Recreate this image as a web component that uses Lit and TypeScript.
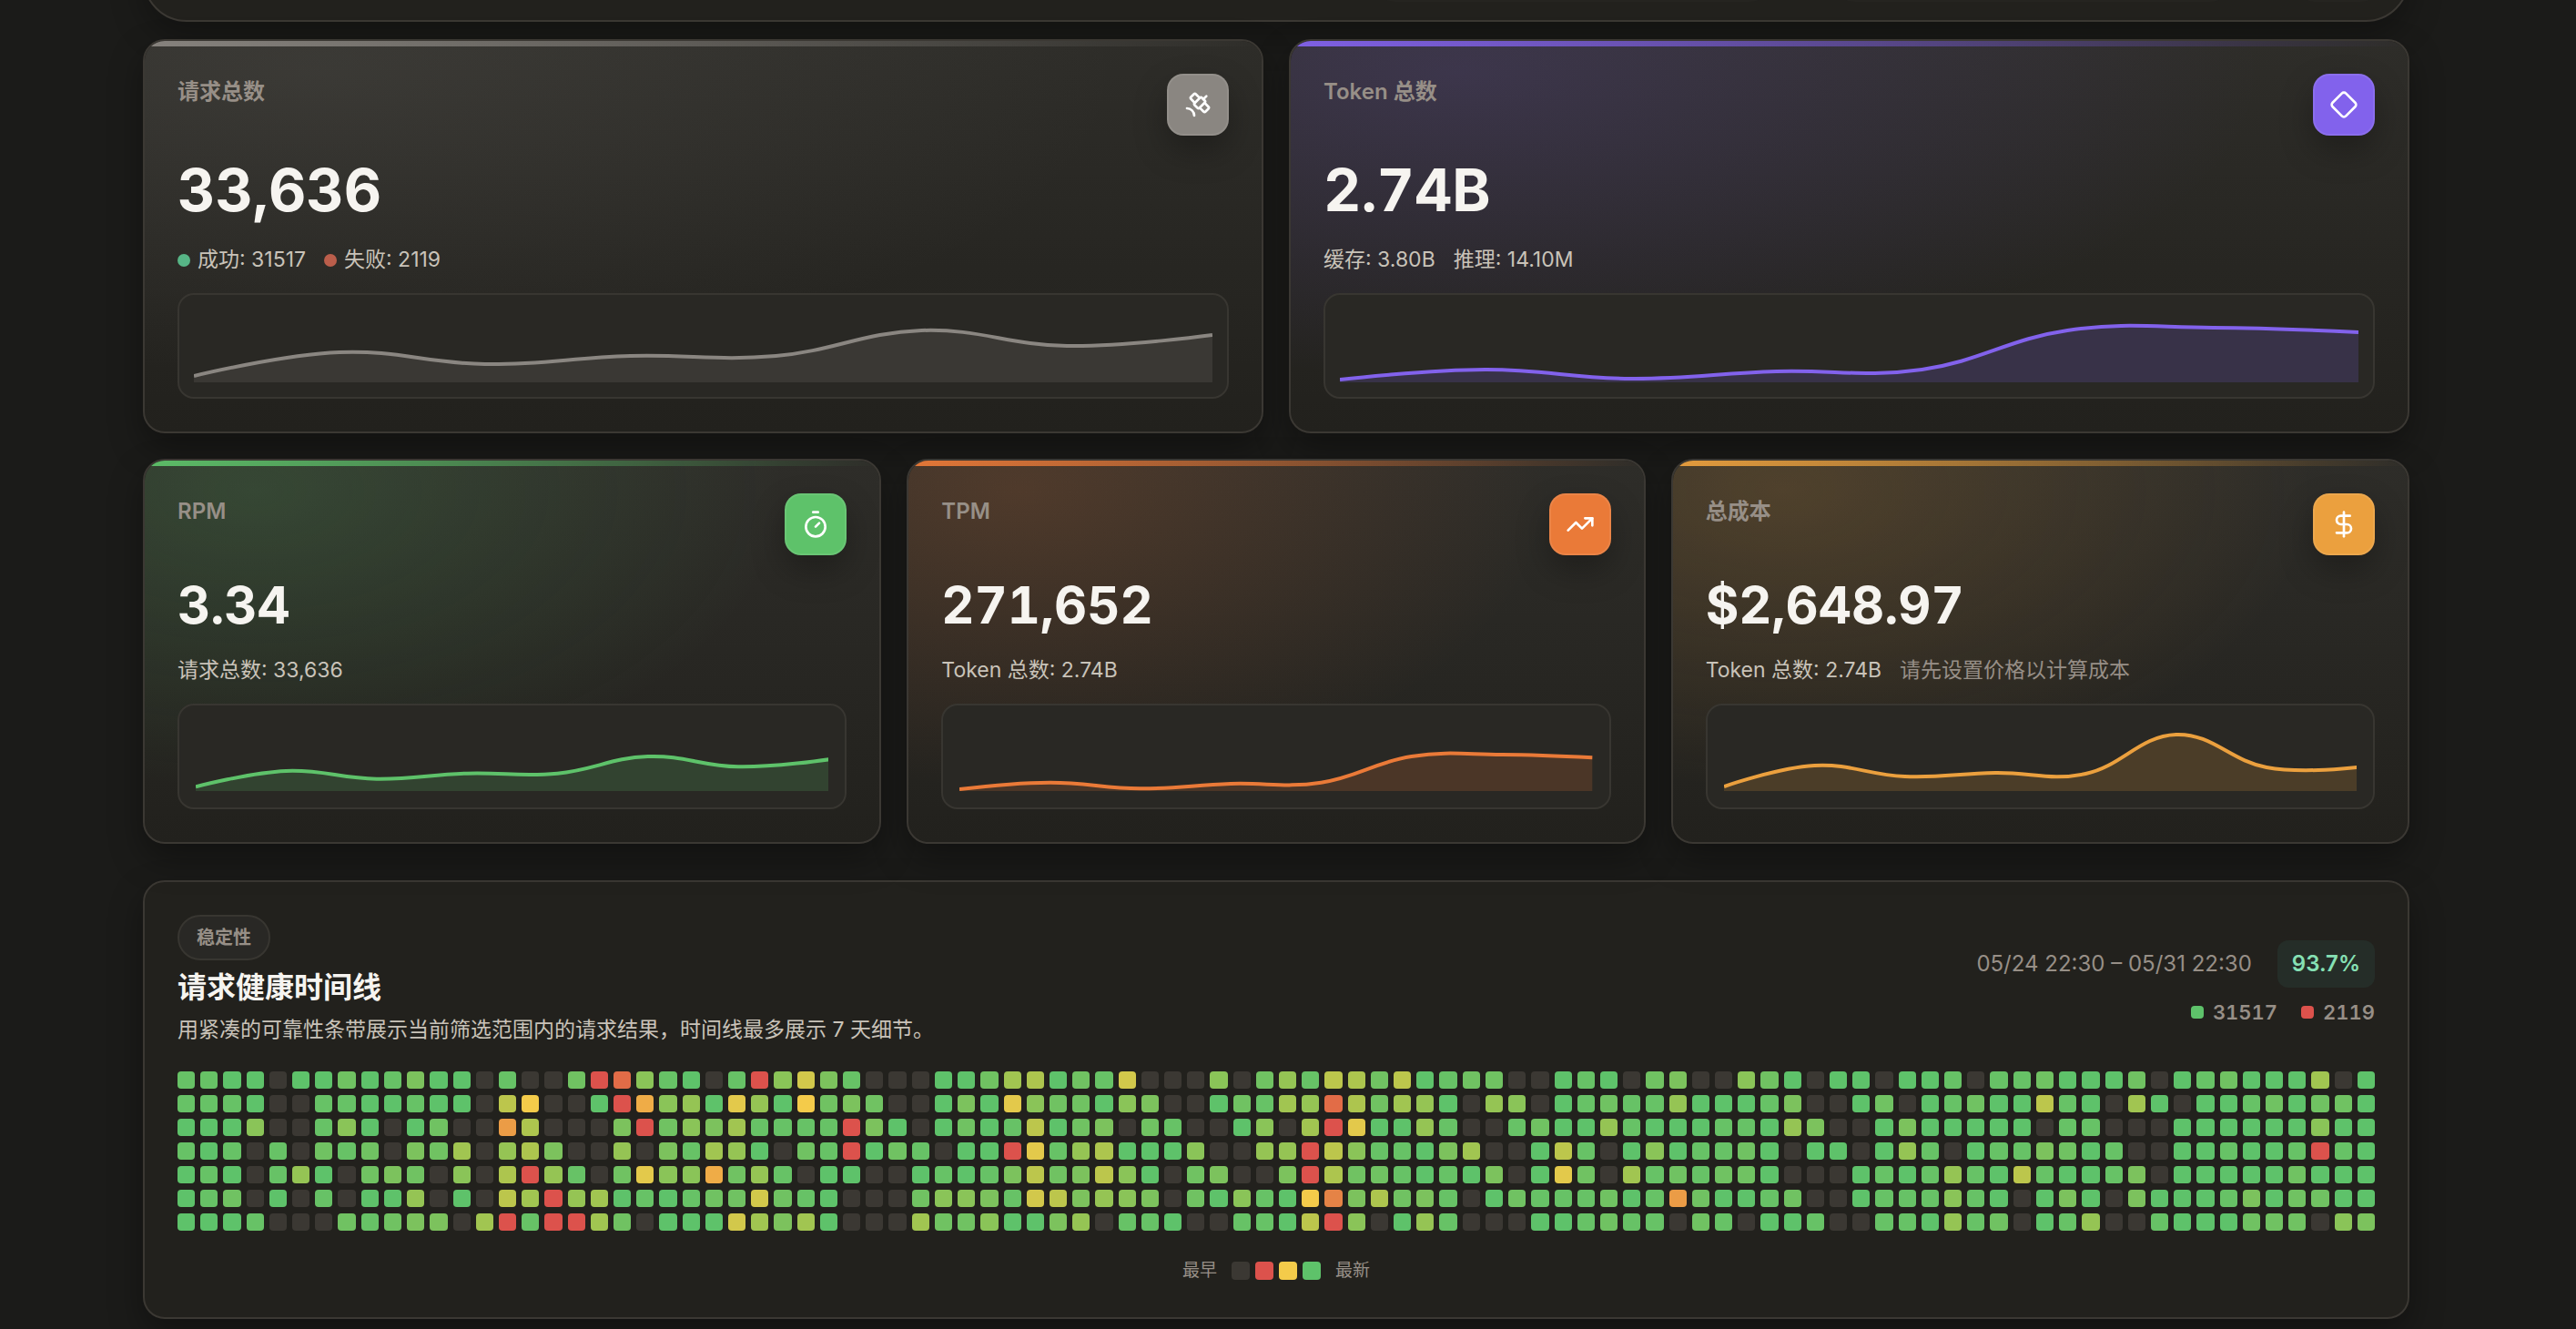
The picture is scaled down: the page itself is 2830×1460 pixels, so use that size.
import { LitElement, html, css, svg } from "lit";
import { customElement, property } from "lit/decorators.js";
import { styleMap } from "lit/directives/style-map.js";

type Tone = "slate" | "violet" | "green" | "orange" | "amber";

interface Meta {
  text: string;
  dot?: "ok" | "bad";
  muted?: boolean;
}

interface Stat {
  label: string;
  value: string;
  tone: Tone;
  icon: keyof typeof ICONS;
  meta: Meta[];
  points: number[];
}

const ICONS = {
  satellite: svg`<path d="m13.5 6.5-3.148-3.148a1.205 1.205 0 0 0-1.704 0L6.352 5.648a1.205 1.205 0 0 0 0 1.704L9.5 10.5"/><path d="M16.5 7.5 19 5"/><path d="m17.5 10.5 3.148 3.148a1.205 1.205 0 0 1 0 1.704l-2.296 2.296a1.205 1.205 0 0 1-1.704 0L13.5 14.5"/><path d="M9 21a6 6 0 0 0-6-6"/><path d="M9.352 10.648a1.205 1.205 0 0 0 0 1.704l2.296 2.296a1.205 1.205 0 0 0 1.704 0l4.296-4.296a1.205 1.205 0 0 0 0-1.704l-2.296-2.296a1.205 1.205 0 0 0-1.704 0z"/>`,
  diamond: svg`<path d="M2.7 10.3a2.41 2.41 0 0 0 0 3.41l7.59 7.59a2.41 2.41 0 0 0 3.41 0l7.59-7.59a2.41 2.41 0 0 0 0-3.41l-7.59-7.59a2.41 2.41 0 0 0-3.41 0Z"/>`,
  timer: svg`<line x1="10" x2="14" y1="2" y2="2"/><line x1="12" x2="15" y1="14" y2="11"/><circle cx="12" cy="14" r="8"/>`,
  trending: svg`<polyline points="22 7 13.5 15.5 8.5 10.5 2 17"/><polyline points="16 7 22 7 22 13"/>`,
  dollar: svg`<line x1="12" x2="12" y1="2" y2="22"/><path d="M17 5H9.5a3.5 3.5 0 0 0 0 7h5a3.5 3.5 0 0 1 0 7H6"/>`,
};

const REQUESTS = [7, 33, 20, 29, 29, 57, 40, 52];
const TOKENS = [3, 14, 4, 12, 14, 57, 60, 55];
const COST = [5, 28, 16, 20, 19, 62, 26, 26];
const shrink = (list: number[]) => list.map((v) => (v * 2) / 3);

const PRIMARY: Stat[] = [
  {
    label: "请求总数",
    value: "33,636",
    tone: "slate",
    icon: "satellite",
    meta: [
      { text: "成功: 31517", dot: "ok" },
      { text: "失败: 2119", dot: "bad" },
    ],
    points: REQUESTS,
  },
  {
    label: "Token 总数",
    value: "2.74B",
    tone: "violet",
    icon: "diamond",
    meta: [{ text: "缓存: 3.80B" }, { text: "推理: 14.10M" }],
    points: TOKENS,
  },
];

const SECONDARY: Stat[] = [
  {
    label: "RPM",
    value: "3.34",
    tone: "green",
    icon: "timer",
    meta: [{ text: "请求总数: 33,636" }],
    points: shrink(REQUESTS),
  },
  {
    label: "TPM",
    value: "271,652",
    tone: "orange",
    icon: "trending",
    meta: [{ text: "Token 总数: 2.74B" }],
    points: shrink(TOKENS),
  },
  {
    label: "总成本",
    value: "$2,648.97",
    tone: "amber",
    icon: "dollar",
    meta: [
      { text: "Token 总数: 2.74B" },
      { text: "请先设置价格以计算成本", muted: true },
    ],
    points: COST,
  },
];

// One string per row, one letter per time slot: "." is idle,
// "a" is fully healthy, "l" is half healthy and "r" is failing.
const SLOTS = [
  "bbaa.aacabdaa" + ".b..crpeba.br" + "ejdb...aacghacbj...e." + "cfbihciabcc..aba.cd..eca" + ".aa.aab.bbcaaac.abcaaag.a",
  "bbba..bbaabaa" + ".il..armefakf" + "alcdc..adakeccaed..ac" + "bgfphcgfa.fe.abcbbfaaabd" + "..ac.abcaaiba.ga.aabcacca",
  "aaae..bea.ac." + ".nh...drcedgb" + "bbbrda.acabiacd.cb..a" + "e.grkaafb..bcaafbaaabbaf" + "d..adaaaaa.bb...aaaaaaeaa",
  "bab.b.cbc.dcg" + ".fhd..f.dbgfa" + ".cbracb.aarkbfhaaae.." + "ffriebbadg..aib.aeabbca." + "aa.afb.abbdcab..aabaabrba",
  "aba.bfa.cdc.e" + ".hrfb.ckeemcf" + "b.aa..ababdicdiea.cd." + ".drhccbabad.akc.gbcbcca." + "..ababfbaibaabd.aaaaacaaa",
  "abc.a.b.aaf.a" + ".igrfgababccj" + "cba...ceedbjidfed.cae" + "balodhcdb.acbbbcabncaabc" + "..abbbeba.ada.daaabdaccaa",
  "aaab...cbcdd." + "grbrrgc.aaajg" + "dga...gcceaadf.bba..b" + "baire.afb...aabcbb.cb.aa" + "b..bbafbc.abf..baaaccc.ed",
];

const SLOT_COLORS: Record<string, string> = {
  ".": "#3b3833",
  a: "#5ec26a",
  b: "#67c266",
  c: "#70c262",
  d: "#7cc25d",
  e: "#8ac458",
  f: "#95c454",
  g: "#a1c551",
  h: "#adc54e",
  i: "#bcc64c",
  j: "#d2c84b",
  k: "#e3c94b",
  l: "#f4cb4a",
  m: "#efac47",
  n: "#eb9c46",
  o: "#e58346",
  p: "#e26c47",
  r: "#dc524c",
};

const WIDTH = 700;

function smoothPath(values: number[], height: number): string {
  const step = WIDTH / (values.length - 1);
  const at = (i: number) => height - values[Math.max(0, Math.min(values.length - 1, i))];
  let d = `M0 ${at(0)}`;
  for (let i = 0; i < values.length - 1; i++) {
    const first = i === 0;
    const last = i === values.length - 2;
    const x1 = first ? 0 : (i + 0.4) * step;
    const x2 = last ? WIDTH : (i + 0.6) * step;
    const y1 = first ? at(0) : at(i) + 0.2 * (at(i + 1) - at(i - 1));
    const y2 = last ? at(i + 1) : at(i + 1) - 0.2 * (at(i + 2) - at(i));
    d += ` C${x1} ${y1} ${x2} ${y2} ${(i + 1) * step} ${at(i + 1)}`;
  }
  return d;
}

@customElement("stat-card")
class StatCard extends LitElement {
  @property({ attribute: false }) stat!: Stat;
  @property({ type: Boolean }) large = false;

  static styles = css`
    :host {
      display: block;
      min-width: 0;
    }
    .wrap {
      height: 100%;
      border-radius: 24px;
      box-shadow: 0 16px 36px rgba(0, 0, 0, 0.34);
    }
    .card {
      position: relative;
      overflow: hidden;
      box-sizing: border-box;
      height: 100%;
      padding: 36px;
      display: flex;
      flex-direction: column;
      border: 2px solid #3b3833;
      border-radius: 24px;
      background:
        radial-gradient(ellipse farthest-corner at 15% 8%, var(--glow), transparent 60%),
        linear-gradient(180deg, #2e2d29, #22211d);
      background-clip: padding-box;
    }
    .slate { --accent: #8a8681; --glow: rgba(138, 135, 130, 0.15); }
    .violet { --accent: #8262ec; --glow: rgba(130, 98, 236, 0.18); }
    .green { --accent: #5ec26a; --glow: rgba(94, 194, 106, 0.18); }
    .orange { --accent: #ea7a38; --glow: rgba(234, 122, 56, 0.18); }
    .amber { --accent: #eba03e; --glow: rgba(235, 160, 62, 0.18); }
    .bar {
      position: absolute;
      inset: 0 0 auto 0;
      height: 6px;
      opacity: 0.95;
      background: linear-gradient(90deg, var(--accent), transparent);
    }
    .head {
      display: flex;
      justify-content: space-between;
      align-items: flex-start;
    }
    .label {
      margin: 0;
      font-size: 24px;
      line-height: 40px;
      font-weight: 600;
      color: #978f87;
    }
    .icon {
      box-sizing: border-box;
      width: 68px;
      height: 68px;
      display: grid;
      place-items: center;
      border: 2px solid rgba(255, 255, 255, 0.08);
      border-radius: 18px;
      background: var(--accent);
      background-origin: border-box;
      box-shadow: 0 16px 36px rgba(0, 0, 0, 0.28);
    }
    .icon svg {
      width: 32px;
      height: 32px;
      fill: none;
      stroke: #fff;
      stroke-width: 2;
      stroke-linecap: round;
      stroke-linejoin: round;
    }
    .value {
      margin-top: 25px;
      font-size: 56px;
      line-height: 60px;
      font-weight: 700;
      font-variant-numeric: tabular-nums;
      color: #f6f4f0;
    }
    .large .value {
      font-size: 64px;
      line-height: 70px;
    }
    .meta {
      margin-top: 24px;
      display: flex;
      flex-wrap: wrap;
      gap: 0 20px;
      font-size: 23px;
      line-height: 35px;
      color: #c9c3b9;
    }
    .item {
      display: flex;
      align-items: center;
      gap: 8px;
    }
    .muted { color: #978f87; }
    .dot {
      width: 14px;
      height: 14px;
      border-radius: 50%;
    }
    .ok { background: #57b586; }
    .bad { background: #bb5e4b; }
    .spark {
      margin-top: 19px;
      padding: 18px;
      border: 2px solid #383631;
      border-radius: 18px;
      background: #292824;
    }
    .large .spark { padding: 16px; }
    .spark svg {
      display: block;
      width: 100%;
      height: 76px;
    }
    .large .spark svg { height: 80px; }
    .area {
      fill: var(--accent);
      opacity: 0.18;
    }
    .line {
      fill: none;
      stroke: var(--accent);
      stroke-width: 4;
      vector-effect: non-scaling-stroke;
    }
  `;

  render() {
    const s = this.stat;
    const h = this.large ? 80 : 76;
    const path = smoothPath(s.points, h);
    return html`
      <div class="wrap">
        <article class="card ${s.tone} ${this.large ? "large" : ""}">
          <div class="bar"></div>
          <div class="head">
            <h3 class="label">${s.label}</h3>
            <span class="icon"><svg viewBox="0 0 24 24" aria-hidden="true">${ICONS[s.icon]}</svg></span>
          </div>
          <div class="value">${s.value}</div>
          <div class="meta">
            ${s.meta.map(
              (m) => html`<span class="item ${m.muted ? "muted" : ""}"
                >${m.dot ? html`<i class="dot ${m.dot}"></i>` : ""}<span>${m.text}</span></span
              >`
            )}
          </div>
          <div class="spark">
            <svg viewBox="0 0 ${WIDTH} ${h}" preserveAspectRatio="none" aria-hidden="true">
              <path class="area" d="${path} L${WIDTH} ${h} L0 ${h} Z"></path>
              <path class="line" d=${path}></path>
            </svg>
          </div>
        </article>
      </div>
    `;
  }
}

@customElement("health-timeline")
class HealthTimeline extends LitElement {
  static styles = css`
    :host { display: block; }
    .panel {
      padding: 36px;
      border: 2px solid #3b3833;
      border-radius: 24px;
      background: #22211d;
      box-shadow: 0 16px 36px rgba(0, 0, 0, 0.34);
    }
    .head {
      display: flex;
      justify-content: space-between;
      align-items: center;
    }
    .intro {
      display: flex;
      flex-direction: column;
      align-items: flex-start;
    }
    .pill {
      box-sizing: border-box;
      height: 50px;
      padding: 0 19px;
      border: 2px solid #383631;
      border-radius: 25px;
      background: #292825;
      font-size: 20px;
      line-height: 46px;
      font-weight: 600;
      color: #978f87;
    }
    .title {
      margin: 8px 0 0;
      font-size: 32px;
      line-height: 44px;
      font-weight: 700;
      color: #f6f4f0;
    }
    .desc {
      margin: 6px 0 0;
      font-size: 23px;
      line-height: 36px;
      color: #c9c3b9;
    }
    .side {
      padding-top: 4px;
      display: flex;
      flex-direction: column;
      align-items: flex-end;
      gap: 14px;
    }
    .range {
      display: flex;
      align-items: center;
      gap: 28px;
      font-size: 24px;
      line-height: 32px;
      color: #978f87;
    }
    .rate {
      padding: 10px 16px;
      border-radius: 12px;
      background: #252d28;
      font-weight: 600;
      color: #86e0b4;
    }
    .totals {
      display: flex;
      gap: 26px;
      font-size: 22px;
      line-height: 26px;
      font-weight: 600;
      font-variant-numeric: tabular-nums;
      color: #978f87;
    }
    .total {
      display: flex;
      align-items: center;
      gap: 10px;
    }
    .mark {
      width: 14px;
      height: 14px;
      border-radius: 4px;
    }
    .grid {
      margin-top: 28px;
      display: grid;
      grid-template-columns: repeat(96, minmax(0, 1fr));
      gap: 7px 6px;
    }
    .slot {
      height: 19px;
      border-radius: 4px;
    }
    .legend {
      margin-top: 29px;
      display: flex;
      justify-content: center;
      align-items: center;
      gap: 16px;
      font-size: 19px;
      line-height: 30px;
      color: #978f87;
    }
    .scale {
      display: flex;
      gap: 6px;
    }
    .key {
      width: 20px;
      height: 20px;
      border-radius: 4px;
    }
  `;

  render() {
    const fill = (level: string) => styleMap({ background: SLOT_COLORS[level] });
    return html`
      <section class="panel">
        <div class="head">
          <div class="intro">
            <span class="pill">稳定性</span>
            <h2 class="title">请求健康时间线</h2>
            <p class="desc">用紧凑的可靠性条带展示当前筛选范围内的请求结果，时间线最多展示 7 天细节。</p>
          </div>
          <div class="side">
            <div class="range">
              <span>05/24 22:30 – 05/31 22:30</span>
              <span class="rate">93.7%</span>
            </div>
            <div class="totals">
              <span class="total"><i class="mark" style=${fill("a")}></i>31517</span>
              <span class="total"><i class="mark" style=${fill("r")}></i>2119</span>
            </div>
          </div>
        </div>
        <div class="grid">
          ${SLOTS.map((row) => [...row].map((c) => html`<i class="slot" style=${fill(c)}></i>`))}
        </div>
        <div class="legend">
          <span>最早</span>
          <span class="scale">
            ${[".", "r", "l", "a"].map((c) => html`<i class="key" style=${fill(c)}></i>`)}
          </span>
          <span>最新</span>
        </div>
      </section>
    `;
  }
}

@customElement("app-root")
class AppRoot extends LitElement {
  static styles = css`
    :host {
      display: flow-root;
      min-height: 100vh;
      box-sizing: border-box;
      padding: 0 183px 11px 157px;
      background: #1b1b19;
      font-family: Inter, "Noto Sans CJK SC", sans-serif;
    }
    /* The filter panel is scrolled off: only its lower edge stays in view. */
    .filters {
      box-sizing: border-box;
      height: 124px;
      margin-top: -100px;
      padding: 40px 28px 20px;
      display: flex;
      justify-content: flex-end;
      gap: 68px;
      border: 2px solid #3b3833;
      border-radius: 48px;
      background: #22211d;
      box-shadow: 0 16px 36px rgba(0, 0, 0, 0.28);
    }
    .field {
      width: 18%;
      border-radius: 24px;
      background: #252420;
    }
    .field.narrow { width: 4%; }
    .row {
      display: grid;
      gap: 28px;
    }
    .primary {
      margin-top: 19px;
      grid-template-columns: repeat(2, minmax(0, 1fr));
    }
    .secondary {
      margin-top: 28px;
      grid-template-columns: repeat(3, minmax(0, 1fr));
    }
    .timeline {
      margin-top: 40px;
    }
  `;

  render() {
    return html`
      <div class="filters">
        <div class="field"></div>
        <div class="field"></div>
        <div class="field narrow"></div>
      </div>
      <div class="row primary">
        ${PRIMARY.map((s) => html`<stat-card .stat=${s} large></stat-card>`)}
      </div>
      <div class="row secondary">
        ${SECONDARY.map((s) => html`<stat-card .stat=${s}></stat-card>`)}
      </div>
      <health-timeline class="timeline"></health-timeline>
    `;
  }
}
